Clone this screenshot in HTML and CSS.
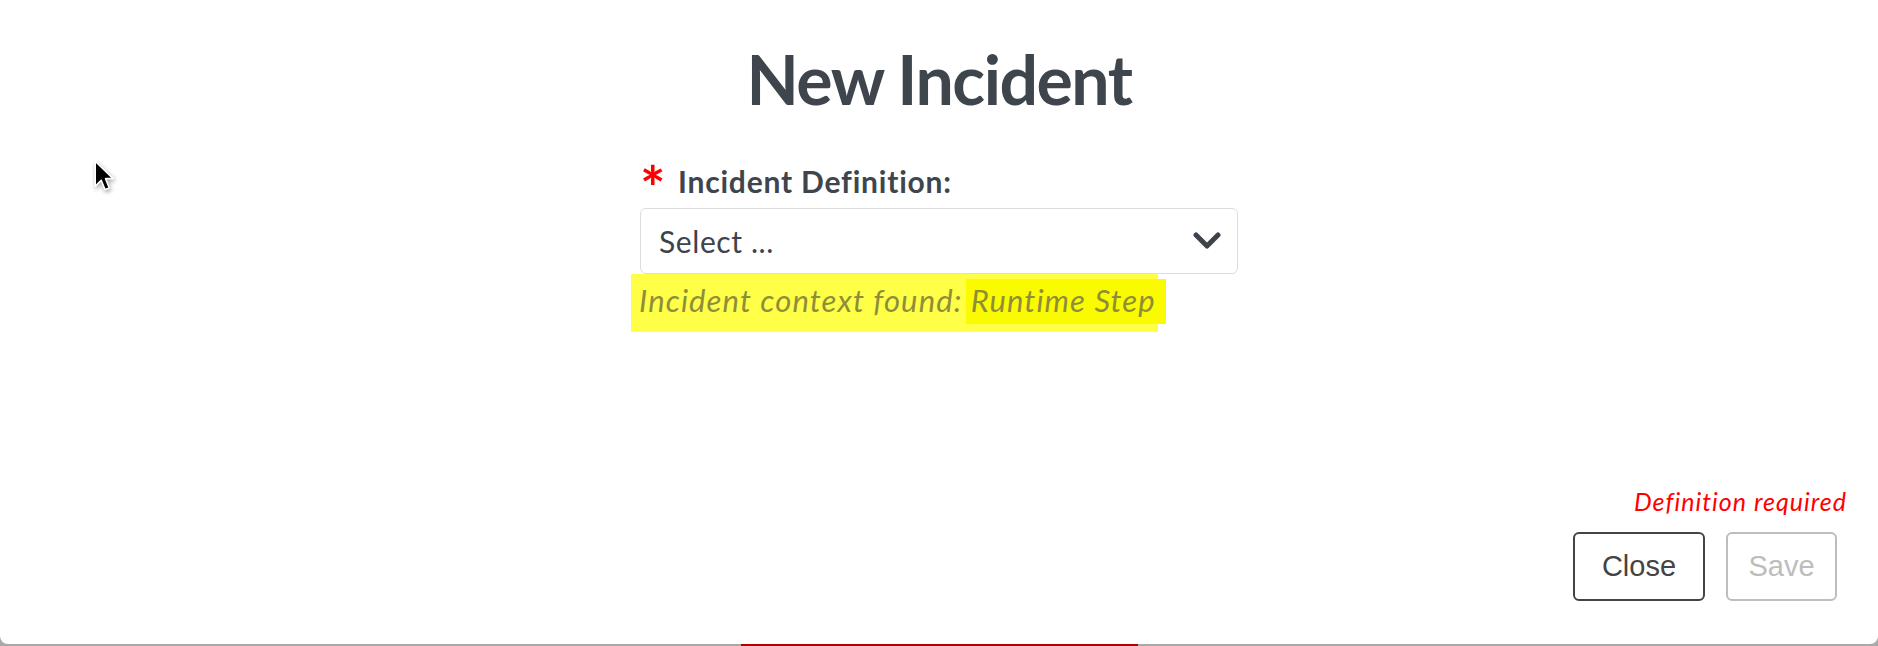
FILE: index.html
```html
<!DOCTYPE html>
<html lang="en">

<head>
    <meta charset="UTF-8">
    <meta name="viewport" content="width=device-width, initial-scale=1.0">
    <title>New Incident</title>
    <link rel="stylesheet" href="styles.css">
</head>

<body>
    <div class="modal">
        <h1 class="modal-title">New Incident</h1>

        <div class="form-group">
            <label class="field-label"><span class="required">*</span>Incident Definition:</label>
            <div class="select-box">
                <span class="select-placeholder">Select ...</span>
                <svg class="chevron" width="28" height="18" viewBox="0 0 28 18">
                    <path d="M3 3 L14 14 L25 3" fill="none" stroke="#3d434a" stroke-width="5" stroke-linecap="round" stroke-linejoin="round" />
                </svg>
            </div>
            <div class="context-note">
                <span class="mark">Incident context found: <span class="mark-strong">Runtime Step</span></span>
            </div>
        </div>

        <div class="modal-footer">
            <div class="error-text">Definition required</div>
            <div class="button-row">
                <button class="btn btn-close" type="button">Close</button>
                <button class="btn btn-save" type="button" disabled>Save</button>
            </div>
        </div>
    </div>

    <div class="backdrop-strip">
        <div class="strip-accent"></div>
    </div>

    <!-- mouse pointer captured in the screenshot -->
    <svg class="pointer" width="24" height="35" viewBox="0 0 22 32">
        <path d="M2 2 L2 25 L7.5 19.5 L11 28 L15 26.5 L11.5 18 L18.5 18 Z" fill="#000" stroke="#fff" stroke-width="1.5" stroke-linejoin="round" />
    </svg>
</body>

</html>
```

FILE: styles.css
```css
body {
    margin: 0;
    padding: 0;
    background-color: #a9a9a9;
    font-family: Lato, "Open Sans", sans-serif;
    height: 646px;
    overflow: hidden;
}

.modal {
    height: 644px;
    background-color: #fff;
    border-radius: 0 0 8px 8px;
    display: flex;
    flex-direction: column;
    box-sizing: border-box;
}

.modal-title {
    margin: 0;
    padding-top: 38px;
    text-align: center;
    font-size: 68px;
    font-weight: 700;
    letter-spacing: -1.5px;
    line-height: 1.2;
    color: #3e454c;
}

.form-group {
    width: 598px;
    margin: 43px auto 0;
}

.field-label {
    display: flex;
    align-items: center;
    font-size: 30px;
    font-weight: 700;
    letter-spacing: 0.8px;
    line-height: 36px;
    color: #3e454c;
}

.required {
    color: #ff0000;
    font-size: 60px;
    font-weight: 700;
    line-height: 36px;
    width: 38px;
    letter-spacing: 0;
    position: relative;
    top: 6px;
}

.select-box {
    margin-top: 9px;
    height: 66px;
    box-sizing: border-box;
    border: 1px solid #dcdcdc;
    border-radius: 6px;
    display: flex;
    align-items: center;
    justify-content: space-between;
    padding: 0 16px 0 18px;
}

.select-placeholder {
    font-size: 30px;
    letter-spacing: 0.6px;
    color: #3d434a;
}

.context-note {
    margin-left: -9px;
}

.mark {
    display: inline-block;
    background-color: rgba(255, 255, 40, 0.85);
    padding: 8px 1px 14px 8px;
    font-size: 31px;
    font-style: italic;
    letter-spacing: 1.1px;
    line-height: 36px;
    color: #8e8e3a;
}

.mark-strong {
    background-color: #fbfb00;
    padding: 2px 10px 5px 5px;
    margin: 0 -9px 0 -5px;
}

.modal-footer {
    margin-top: auto;
    display: flex;
    flex-direction: column;
    align-items: flex-end;
    padding: 0 31px 43px 0;
}

.error-text {
    font-size: 25px;
    font-style: italic;
    letter-spacing: 1px;
    color: #ff0000;
    line-height: 28px;
}

.button-row {
    display: flex;
    gap: 21px;
    margin-top: 17px;
    margin-right: 10px;
}

.btn {
    height: 69px;
    box-sizing: border-box;
    border-radius: 6px;
    background-color: #fff;
    font-family: "Liberation Sans", Arial, sans-serif;
    font-size: 29px;
    padding: 0;
}

.btn-close {
    width: 132px;
    border: 2px solid #444;
    color: #444;
}

.btn-save {
    width: 111px;
    border: 2px solid #bdbdbd;
    color: #bdbdbd;
}

.backdrop-strip {
    height: 2px;
    display: flex;
    justify-content: center;
}

.strip-accent {
    width: 397px;
    background-color: #b00000;
}

.pointer {
    position: absolute;
    left: 93px;
    top: 159px;
    filter: drop-shadow(1px 2px 2px rgba(0, 0, 0, 0.35));
}
```
